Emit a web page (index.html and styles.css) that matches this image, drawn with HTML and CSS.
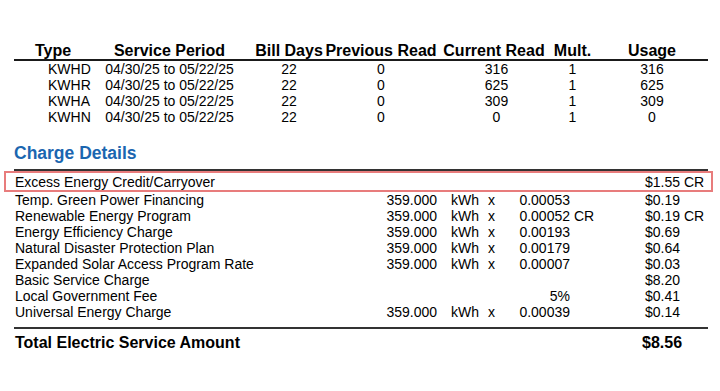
FILE: index.html
```html
<!DOCTYPE html>
<html>
<head>
<meta charset="utf-8">
<link rel="stylesheet" href="styles.css">
</head>
<body>
<div class="page">
  <section class="usage">
    <div class="urow uhead">
      <span class="cell type-h">Type</span>
      <span class="cell">Service Period</span>
      <span class="cell">Bill Days</span>
      <span class="cell">Previous Read</span>
      <span class="cell">Current Read</span>
      <span class="cell">Mult.</span>
      <span class="cell">Usage</span>
    </div>
    <div class="urow">
      <span class="cell type-d">KWHD</span>
      <span class="cell">04/30/25 to 05/22/25</span>
      <span class="cell">22</span>
      <span class="cell">0</span>
      <span class="cell cur">316</span>
      <span class="cell">1</span>
      <span class="cell">316</span>
    </div>
    <div class="urow">
      <span class="cell type-d">KWHR</span>
      <span class="cell">04/30/25 to 05/22/25</span>
      <span class="cell">22</span>
      <span class="cell">0</span>
      <span class="cell cur">625</span>
      <span class="cell">1</span>
      <span class="cell">625</span>
    </div>
    <div class="urow">
      <span class="cell type-d">KWHA</span>
      <span class="cell">04/30/25 to 05/22/25</span>
      <span class="cell">22</span>
      <span class="cell">0</span>
      <span class="cell cur">309</span>
      <span class="cell">1</span>
      <span class="cell">309</span>
    </div>
    <div class="urow">
      <span class="cell type-d">KWHN</span>
      <span class="cell">04/30/25 to 05/22/25</span>
      <span class="cell">22</span>
      <span class="cell">0</span>
      <span class="cell cur">0</span>
      <span class="cell">1</span>
      <span class="cell">0</span>
    </div>
  </section>

  <section class="charges">
    <h2 class="title">Charge Details</h2>
    <div class="crow highlight">
      <span class="label">Excess Energy Credit/Carryover</span>
      <span class="qty"></span><span class="unit"></span><span class="times"></span><span class="rate"></span>
      <span class="amt">$1.55 CR</span>
    </div>
    <div class="crow">
      <span class="label">Temp. Green Power Financing</span>
      <span class="qty">359.000</span><span class="unit">kWh</span><span class="times">x</span>
      <span class="rate"><span class="num">0.00053</span></span>
      <span class="amt">$0.19</span>
    </div>
    <div class="crow">
      <span class="label">Renewable Energy Program</span>
      <span class="qty">359.000</span><span class="unit">kWh</span><span class="times">x</span>
      <span class="rate"><span class="num">0.00052</span> CR</span>
      <span class="amt">$0.19 CR</span>
    </div>
    <div class="crow">
      <span class="label">Energy Efficiency Charge</span>
      <span class="qty">359.000</span><span class="unit">kWh</span><span class="times">x</span>
      <span class="rate"><span class="num">0.00193</span></span>
      <span class="amt">$0.69</span>
    </div>
    <div class="crow">
      <span class="label">Natural Disaster Protection Plan</span>
      <span class="qty">359.000</span><span class="unit">kWh</span><span class="times">x</span>
      <span class="rate"><span class="num">0.00179</span></span>
      <span class="amt">$0.64</span>
    </div>
    <div class="crow">
      <span class="label">Expanded Solar Access Program Rate</span>
      <span class="qty">359.000</span><span class="unit">kWh</span><span class="times">x</span>
      <span class="rate"><span class="num">0.00007</span></span>
      <span class="amt">$0.03</span>
    </div>
    <div class="crow">
      <span class="label">Basic Service Charge</span>
      <span class="qty"></span><span class="unit"></span><span class="times"></span><span class="rate"></span>
      <span class="amt">$8.20</span>
    </div>
    <div class="crow">
      <span class="label">Local Government Fee</span>
      <span class="qty"></span><span class="unit"></span><span class="times"></span>
      <span class="rate"><span class="num">5%</span></span>
      <span class="amt">$0.41</span>
    </div>
    <div class="crow">
      <span class="label">Universal Energy Charge</span>
      <span class="qty">359.000</span><span class="unit">kWh</span><span class="times">x</span>
      <span class="rate"><span class="num">0.00039</span></span>
      <span class="amt">$0.14</span>
    </div>
    <div class="total">
      <span class="total-label">Total Electric Service Amount</span>
      <span class="total-amt">$8.56</span>
    </div>
  </section>
</div>
</body>
</html>
```
FILE: styles.css
```css
html, body {
  margin: 0;
  padding: 0;
  background: #ffffff;
}

body {
  font-family: "Liberation Sans", Arial, sans-serif;
  color: #000000;
}

.page {
  width: 694px;
  padding: 42px 0 0 14px;
}

/* Usage table */
.urow {
  display: grid;
  grid-template-columns: 86px 139px 100px 84px 142px 15px 144px;
  font-size: 14px;
  line-height: 16px;
}

.cell {
  justify-self: center;
  white-space: nowrap;
}

.uhead {
  font-size: 16px;
  font-weight: bold;
  line-height: 17px;
  border-bottom: 2px solid #1a1a1a;
}

.type-h {
  justify-self: start;
  padding-left: 21px;
}

.type-d {
  justify-self: start;
  padding-left: 34px;
}

.cur {
  padding-left: 5px;
}

/* Charges */
.charges {
  margin-top: 18px;
}

.title {
  margin: 0;
  font-size: 17.5px;
  line-height: 20px;
  font-weight: bold;
  color: #1b66b0;
  padding-bottom: 6px;
  border-bottom: 2px solid #333333;
}

.crow {
  display: grid;
  grid-template-columns: 359px 64px 51px 31px 126px 1fr;
  font-size: 14px;
  line-height: 16px;
  white-space: nowrap;
}

.highlight {
  margin: 0 -5px 0 -10px;
  padding: 2px 3px 0 8px;
  line-height: 15px;
  border: 2px solid #e87c7c;
}

.label {
  padding-left: 1px;
}

.qty {
  text-align: right;
}

.unit {
  padding-left: 14px;
}

.num {
  display: inline-block;
  min-width: 51px;
  text-align: right;
}

.total {
  display: flex;
  justify-content: space-between;
  margin-top: 7px;
  padding-top: 4px;
  border-top: 2px solid #333333;
  font-size: 16px;
  line-height: 20px;
  font-weight: bold;
}

.total-label {
  padding-left: 1px;
}

.total-amt {
  width: 66px;
}
```
